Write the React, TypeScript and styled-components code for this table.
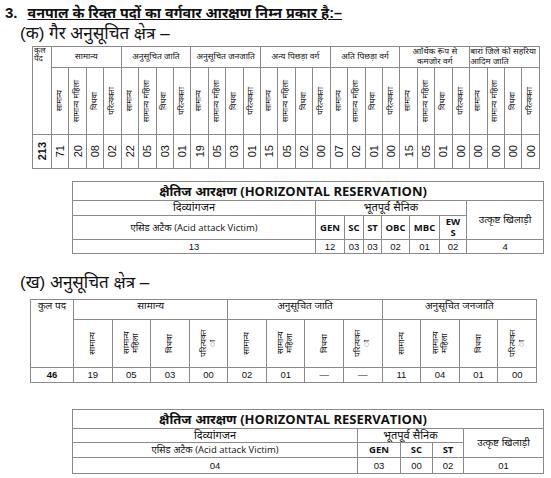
import React from "react";
import styled, { createGlobalStyle } from "styled-components";

const GlobalStyle = createGlobalStyle`
  body {
    margin: 0;
    background: #fff;
    color: #111;
    font-family: "Liberation Sans", "Noto Sans", sans-serif;
  }
`;

const Page = styled.div`
  width: 551px;
  height: 478px;
  overflow: hidden;
  padding-top: 3px;
  box-sizing: border-box;
`;

const TitleLine = styled.div`
  display: flex;
  align-items: baseline;
  gap: 10px;
  padding-left: 5px;
  height: 20px;
`;

const Num = styled.span`
  font-size: 15px;
  font-weight: bold;
`;

const Underlined = styled.span`
  font-size: 14.3px;
  font-weight: bold;
  text-decoration: underline;
`;

const SubHead = styled.div<{ $top: number }>`
  font-size: 17px;
  font-weight: normal;
  padding-left: 20px;
  margin-top: ${(p) => p.$top}px;
  height: 22px;
  line-height: 22px;
`;

const Table = styled.table<{ $left: number; $width: number; $top: number }>`
  border-collapse: collapse;
  table-layout: fixed;
  width: ${(p) => p.$width}px;
  margin-left: ${(p) => p.$left}px;
  margin-top: ${(p) => p.$top}px;
  td {
    border: 1px solid #8a8a8a;
    padding: 0;
    text-align: center;
    vertical-align: middle;
    overflow: hidden;
  }
`;

const Row = styled.tr<{ $h: number }>`
  height: ${(p) => p.$h}px;
`;

const Head = styled.td<{ $size?: number; $align?: string; $valign?: string }>`
  font-size: ${(p) => p.$size ?? 8.5}px;
  line-height: 1.15;
  text-align: ${(p) => p.$align ?? "center"} !important;
  vertical-align: ${(p) => p.$valign ?? "middle"} !important;
`;

const Corner = styled.td`
  font-size: 8px;
  line-height: 1;
  vertical-align: top !important;
  text-align: left !important;
  padding-left: 1px !important;
`;

const Vert = styled.div<{ $size?: number; $bold?: boolean; $max?: number }>`
  writing-mode: vertical-rl;
  transform: rotate(180deg);
  margin: 0 auto;
  font-size: ${(p) => p.$size ?? 8}px;
  font-weight: ${(p) => (p.$bold ? "bold" : "normal")};
  line-height: 1.1;
  max-height: ${(p) => (p.$max ? `${p.$max}px` : "none")};
`;

const Cell = styled.td<{ $size?: number; $bold?: boolean }>`
  font-size: ${(p) => p.$size ?? 10}px;
  font-weight: ${(p) => (p.$bold ? "bold" : "normal")};
  white-space: pre-line;
  line-height: 1.2;
`;

const HTitle = styled.td`
  font-size: 13px;
  font-weight: bold;
  padding-right: 30px !important;
`;

const Latin = styled.span`
  font-family: "Open Sans", "Liberation Sans", sans-serif;
`;

const subCols = ["सामान्य", "सामान्य महिला", "विधवा", "परित्यक्ता"];

const groupsA = [
  { name: "सामान्य", vals: ["71", "20", "08", "02"] },
  { name: "अनुसूचित जाति", vals: ["22", "05", "03", "01"] },
  { name: "अनुसूचित जनजाति", vals: ["19", "05", "03", "01"] },
  { name: "अन्य पिछड़ा वर्ग", vals: ["15", "05", "02", "00"] },
  { name: "अति पिछड़ा वर्ग", vals: ["07", "02", "01", "00"] },
  { name: "आर्थिक रूप से कमजोर वर्ग", vals: ["15", "05", "01", "00"] },
  { name: "बारां जिले की सहरिया आदिम जाति", vals: ["00", "00", "00", "00"], left: true },
];

const groupsB = [
  { name: "सामान्य", vals: ["19", "05", "03", "00"] },
  { name: "अनुसूचित जाति", vals: ["02", "01", "—", "—"] },
  { name: "अनुसूचित जनजाति", vals: ["11", "04", "01", "00"] },
];

const subColsB = ["सामान्य", "सामान्य महिला", "विधवा", "परित्यक्त ा"];

const NonScheduled: React.FC = () => (
  <Table $left={32} $width={508} $top={1}>
    <colgroup>
      <col style={{ width: 19 }} />
      {groupsA.flatMap((g) => g.vals).map((_, i) => (
        <col key={i} />
      ))}
    </colgroup>
    <tbody>
      <Row $h={21}>
        <Corner rowSpan={2}>कुल पद</Corner>
        {groupsA.map((g) => (
          <Head
            key={g.name}
            colSpan={4}
            $align={g.left ? "left" : "center"}
            $valign={g.left ? "top" : "middle"}
          >
            {g.name}
          </Head>
        ))}
      </Row>
      <Row $h={67}>
        {groupsA.flatMap((g) =>
          subCols.map((s) => (
            <td key={g.name + s}>
              <Vert>{s}</Vert>
            </td>
          ))
        )}
      </Row>
      <Row $h={34}>
        <td>
          <Vert $size={11} $bold>
            213
          </Vert>
        </td>
        {groupsA.flatMap((g) =>
          g.vals.map((v, i) => (
            <td key={g.name + i}>
              <Vert $size={11}>{v}</Vert>
            </td>
          ))
        )}
      </Row>
    </tbody>
  </Table>
);

type HProps = {
  top: number;
  widths: number[];
  cats: string[];
  vals: string[];
  total: string;
  sport: string;
  rows: number[];
};

const Horizontal: React.FC<HProps> = ({ top, widths, cats, vals, total, sport, rows }) => (
  <Table $left={72} $width={471} $top={top}>
    <colgroup>
      {widths.map((w, i) => (
        <col key={i} style={{ width: w }} />
      ))}
    </colgroup>
    <tbody>
      <Row $h={rows[0]}>
        <HTitle colSpan={cats.length + 2}>
          क्षैतिज आरक्षण <Latin>(HORIZONTAL RESERVATION)</Latin>
        </HTitle>
      </Row>
      <Row $h={rows[1]}>
        <Cell $size={11}>दिव्यांगजन</Cell>
        <Cell $size={11} colSpan={cats.length}>
          भूतपूर्व सैनिक
        </Cell>
        <Cell $size={10} rowSpan={2}>
          उत्कृष्ट खिलाड़ी
        </Cell>
      </Row>
      <Row $h={rows[2]}>
        <Cell $size={9.5}>
          एसिड अटैक <Latin>(Acid attack Victim)</Latin>
        </Cell>
        {cats.map((c) => (
          <Cell key={c} $size={9.5} $bold>
            <Latin>{c}</Latin>
          </Cell>
        ))}
      </Row>
      <Row $h={rows[3]}>
        <Cell $size={9.5}>{total}</Cell>
        {vals.map((v, i) => (
          <Cell key={i} $size={9.5}>
            {v}
          </Cell>
        ))}
        <Cell $size={9.5}>{sport}</Cell>
      </Row>
    </tbody>
  </Table>
);

const Scheduled: React.FC = () => (
  <Table $left={30} $width={507} $top={5}>
    <colgroup>
      <col style={{ width: 43 }} />
      {groupsB.flatMap((g) => g.vals).map((_, i) => (
        <col key={i} />
      ))}
    </colgroup>
    <tbody>
      <Row $h={20}>
        <Head $size={10} rowSpan={2} $valign="top">
          कुल पद
        </Head>
        {groupsB.map((g) => (
          <Head key={g.name} colSpan={4} $size={10} $valign="top">
            {g.name}
          </Head>
        ))}
      </Row>
      <Row $h={48}>
        {groupsB.flatMap((g) =>
          subColsB.map((s) => (
            <td key={g.name + s}>
              <Vert $size={8.5} $max={34}>
                {s}
              </Vert>
            </td>
          ))
        )}
      </Row>
      <Row $h={15}>
        <Cell $size={9.5} $bold>
          46
        </Cell>
        {groupsB.flatMap((g) =>
          g.vals.map((v, i) => (
            <Cell key={g.name + i} $size={9.5}>
              {v}
            </Cell>
          ))
        )}
      </Row>
    </tbody>
  </Table>
);

const App: React.FC = () => (
  <Page>
    <GlobalStyle />
    <TitleLine>
      <Num>3.</Num>
      <Underlined>वनपाल के रिक्त पदों का वर्गवार आरक्षण निम्न प्रकार है:–</Underlined>
    </TitleLine>
    <SubHead $top={0}>(क) गैर अनुसूचित क्षेत्र –</SubHead>
    <NonScheduled />
    <Horizontal
      top={12}
      widths={[243, 29, 19, 18, 28, 30, 27, 77]}
      cats={["GEN", "SC", "ST", "OBC", "MBC", "EW\nS"]}
      vals={["12", "03", "03", "02", "01", "02"]}
      total="13"
      sport="4"
      rows={[18, 15, 23, 14]}
    />
    <SubHead $top={18}>(ख) अनुसूचित क्षेत्र –</SubHead>
    <Scheduled />
    <Horizontal
      top={26}
      widths={[285, 43, 32, 31, 80]}
      cats={["GEN", "SC", "ST"]}
      vals={["03", "00", "02"]}
      total="04"
      sport="01"
      rows={[15, 13, 15, 16]}
    />
  </Page>
);

export default App;
